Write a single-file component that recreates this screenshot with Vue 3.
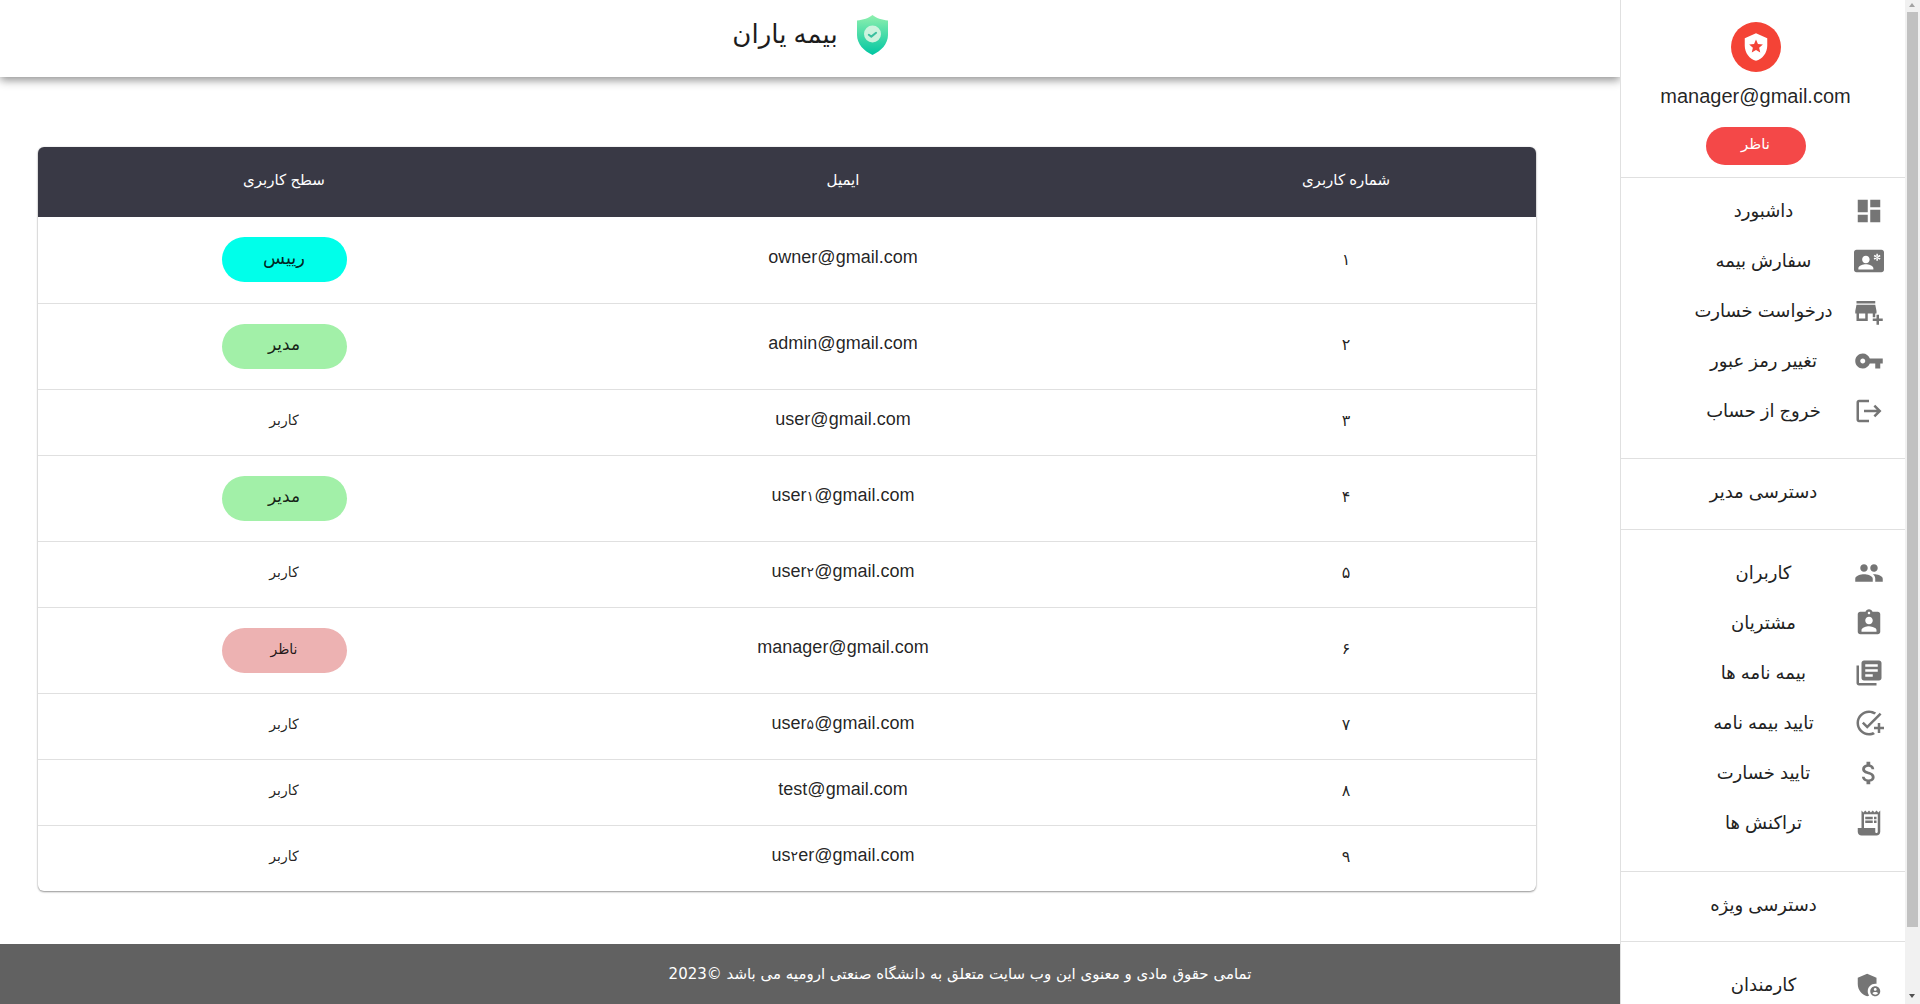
<script setup>
const rows = [
  { id: '۱', email: 'owner@gmail.com', level: 'رییس', chip: 'owner' },
  { id: '۲', email: 'admin@gmail.com', level: 'مدیر', chip: 'admin' },
  { id: '۳', email: 'user@gmail.com', level: 'کاربر', chip: '' },
  { id: '۴', email: 'user۱@gmail.com', level: 'مدیر', chip: 'admin' },
  { id: '۵', email: 'user۲@gmail.com', level: 'کاربر', chip: '' },
  { id: '۶', email: 'manager@gmail.com', level: 'ناظر', chip: 'manager' },
  { id: '۷', email: 'user۵@gmail.com', level: 'کاربر', chip: '' },
  { id: '۸', email: 'test@gmail.com', level: 'کاربر', chip: '' },
  { id: '۹', email: 'us۲er@gmail.com', level: 'کاربر', chip: '' },
]
const emailParts = (email) => email.split(/([۰-۹])/).filter(Boolean)
const isDigit = (part) => /^[۰-۹]$/.test(part)

const dashboard = 'M3 13h8V3H3v10zm0 8h8v-6H3v6zm10 0h8V11h-8v10zm0-18v6h8V3h-8z'
const contact = 'M22 3H2C.9 3 0 3.9 0 5v14c0 1.1.9 2 2 2h20c1.1 0 1.99-.9 1.99-2L24 5c0-1.1-.9-2-2-2z'
const contactOverlay = 'M9.500 7.800c1.700 0 3 1.300 3 3s-1.300 3-3 3-3-1.300-3-3 1.300-3 3-3zM15.500 18.800H3.500v-1c0-2 4-3.100 6-3.100s6 1.100 6 3.100v1zM17.900 6.200h1.200v5.600h-1.200zM20.620 10.920l.6-1.040-4.840-2.800-.6 1.040zM21.220 8.120l-.6-1.040-4.840 2.800.6 1.040z'
const business = 'M2 4h15v2H2zM15 17h2v-3h1v-2l-1-5H2l-1 5v2h1v6h9v-6h4v3zm-6 1H4v-4h5v4zM20 18v-3h-2v3h-3v2h3v3h2v-3h3v-2z'
const key = 'M12.65 10C11.83 7.67 9.61 6 7 6c-3.31 0-6 2.69-6 6s2.69 6 6 6c2.61 0 4.83-1.67 5.65-4H17v4h4v-4h2v-4H12.65zM7 14c-1.1 0-2-.9-2-2s.9-2 2-2 2 .9 2 2-.9 2-2 2z'
const logout = 'M17 7l-1.41 1.41L18.17 11H8v2h10.17l-2.58 2.58L17 17l5-5zM4 5h8V3H4c-1.1 0-2 .9-2 2v14c0 1.1.9 2 2 2h8v-2H4V5z'
const people = 'M16 11c1.66 0 2.99-1.34 2.99-3S17.66 5 16 5c-1.66 0-3 1.34-3 3s1.34 3 3 3zm-8 0c1.66 0 2.99-1.34 2.99-3S9.66 5 8 5C6.34 5 5 6.34 5 8s1.34 3 3 3zm0 2c-2.33 0-7 1.17-7 3.5V19h14v-2.5c0-2.33-4.67-3.5-7-3.5zm8 0c-.29 0-.62.02-.97.05 1.16.84 1.97 1.97 1.97 3.45V19h6v-2.5c0-2.33-4.67-3.5-7-3.5z'
const assignment = 'M19 3h-4.18C14.4 1.84 13.3 1 12 1c-1.3 0-2.4.84-2.82 2H5c-1.1 0-2 .9-2 2v14c0 1.1.9 2 2 2h14c1.1 0 2-.9 2-2V5c0-1.1-.9-2-2-2zm-7 0c.55 0 1 .45 1 1s-.45 1-1 1-1-.45-1-1 .45-1 1-1zm0 4c1.66 0 3 1.34 3 3s-1.34 3-3 3-3-1.34-3-3 1.34-3 3-3zm6 12H6v-1.4c0-2 4-3.1 6-3.1s6 1.100 6 3.100V19z'
const books = 'M4 6H2v14c0 1.1.9 2 2 2h14v-2H4V6zm16-4H8c-1.1 0-2 .9-2 2v12c0 1.1.9 2 2 2h12c1.1 0 2-.9 2-2V4c0-1.1-.9-2-2-2zm-1 9H9V9h10v2zm-4 4H9v-2h6v2zm4-8H9V5h10v2z'
const addTask = 'M22 5.180 10.590 16.600l-4.240-4.240 1.410-1.410 2.830 2.830 10-10L22 5.180zM12 20c-4.410 0-8-3.590-8-8s3.590-8 8-8c1.570 0 3.040.460 4.280 1.250l1.450-1.450C16.100 2.670 14.130 2 12 2 6.480 2 2 6.480 2 12s4.480 10 10 10c1.730 0 3.360-.440 4.780-1.220l-1.500-1.500c-1 .460-2.110.720-3.280.720zM19 15h-3v2h3v3h2v-3h3v-2h-3v-3h-2v3z'
const money = 'M11.8 10.9c-2.27-.59-3-1.2-3-2.15 0-1.09 1.01-1.85 2.7-1.85 1.78 0 2.44.85 2.5 2.1h2.21c-.07-1.72-1.12-3.3-3.21-3.81V3h-3v2.16c-1.94.42-3.5 1.68-3.5 3.61 0 2.31 1.91 3.46 4.7 4.13 2.5.6 3 1.48 3 2.41 0 .69-.49 1.79-2.7 1.79-2.06 0-2.87-.92-2.98-2.1h-2.2c.12 2.19 1.76 3.42 3.68 3.83V21h3v-2.15c1.95-.37 3.5-1.5 3.5-3.55 0-2.84-2.43-3.81-4.7-4.4z'
const receipt = 'M19.5 3.5 18 2l-1.5 1.5L15 2l-1.5 1.5L12 2l-1.5 1.5L9 2 7.5 3.5 6 2v14H3v3c0 1.66 1.34 3 3 3h12c1.66 0 3-1.34 3-3V2l-1.5 1.5zM19 19c0 .55-.45 1-1 1s-1-.45-1-1v-3H8V5h11v14zM9 7h6v2H9zM16 7h2v2h-2zM9 10h6v2H9zM16 10h2v2h-2z'
const admin = 'M17 11c.34 0 .67.04 1 .09V6.27L10.5 3 3 6.27v4.91c0 4.54 3.2 8.79 7.500 9.820.550-.130 1.080-.320 1.600-.550-.690-.980-1.100-2.170-1.100-3.450 0-3.310 2.690-6 6-6zM17 13c-2.210 0-4 1.790-4 4s1.790 4 4 4 4-1.790 4-4-1.790-4-4-4zm0 1.380c.620 0 1.120.510 1.120 1.120s-.510 1.120-1.120 1.120-1.120-.510-1.120-1.120.500-1.120 1.120-1.120zm0 5.370c-.930 0-1.740-.460-2.240-1.170.050-.720 1.510-1.080 2.240-1.080s2.190.360 2.240 1.080c-.500.710-1.310 1.170-2.240 1.170z'
const police = 'M12 1 3 5v6c0 5.550 3.840 10.740 9 12 5.160-1.260 9-6.450 9-12V5l-9-4zm2.500 11.590.9 3.880-3.400-2.050-3.400 2.050.910-3.870-3-2.600 3.960-.340L12 6.020l1.540 3.640 3.960.340-3 2.590z'

const menuMain = [
  { label: 'داشبورد', icon: dashboard },
  { label: 'سفارش بیمه', icon: contact, overlay: contactOverlay },
  { label: 'درخواست خسارت', icon: business },
  { label: 'تغییر رمز عبور', icon: key },
  { label: 'خروج از حساب', icon: logout },
]
const menuAdmin = [
  { label: 'کاربران', icon: people },
  { label: 'مشتریان', icon: assignment },
  { label: 'بیمه نامه ها', icon: books },
  { label: 'تایید بیمه نامه', icon: addTask },
  { label: 'تایید خسارت', icon: money },
  { label: 'تراکنش ها', icon: receipt },
]
const menuSpecial = [{ label: 'کارمندان', icon: admin }]
const sections = [
  { items: menuMain, cls: 'list-main' },
  { heading: 'دسترسی مدیر', items: menuAdmin, cls: 'list-admin' },
  { heading: 'دسترسی ویژه', items: menuSpecial, cls: 'list-special' },
]
</script>

<template>
  <div class="page" dir="rtl">
    <div class="content">
      <header class="topbar">
        <svg class="logo" viewBox="0 0 31 40" width="31" height="40" aria-hidden="true">
          <defs>
            <linearGradient id="shieldFill" x1="0" y1="0" x2="0" y2="1">
              <stop offset="0" stop-color="#8ff0ae" />
              <stop offset="1" stop-color="#00c6a2" />
            </linearGradient>
          </defs>
          <path d="M15.500 0C19 3 25 5 31 5.500V20C31 29 24 36 15.500 40 7 36 0 29 0 20V5.500C6 5 12 3 15.500 0z" fill="url(#shieldFill)" />
          <circle cx="15.500" cy="19" r="8.500" fill="#cdf3de" />
          <path d="M11.800 19.800l2.500 1.800 4.800-3.800" fill="none" stroke="#3bbf9f" stroke-width="2" stroke-linecap="round" stroke-linejoin="round" />
        </svg>
        <span class="brand">بیمه یاران</span>
      </header>

      <main class="table-wrap">
        <table class="users">
          <colgroup>
            <col class="col-id" />
            <col class="col-email" />
            <col class="col-level" />
          </colgroup>
          <thead>
            <tr>
              <th>شماره کاربری</th>
              <th>ایمیل</th>
              <th>سطح کاربری</th>
            </tr>
          </thead>
          <tbody>
            <tr v-for="row in rows" :key="row.id">
              <td class="cell-id">{{ row.id }}</td>
              <td class="cell-email"><span v-for="(part, i) in emailParts(row.email)" :key="i" :class="{ 'mail-digit': isDigit(part) }">{{ part }}</span></td>
              <td class="cell-level">
                <span v-if="row.chip" class="chip" :class="row.chip">{{ row.level }}</span>
                <template v-else>{{ row.level }}</template>
              </td>
            </tr>
          </tbody>
        </table>
      </main>
    </div>

    <footer class="footer">تمامی حقوق مادی و معنوی این وب سایت متعلق به دانشگاه صنعتی ارومیه می باشد ©2023</footer>

    <aside class="sidebar">
      <div class="profile">
        <div class="avatar">
          <svg viewBox="0 0 24 24" width="30" height="30" aria-hidden="true"><path :d="police" fill="#fff" /></svg>
        </div>
        <div class="profile-mail">manager@gmail.com</div>
        <div class="role">ناظر</div>
      </div>

      <template v-for="section in sections" :key="section.cls">
        <div v-if="section.heading" class="heading">{{ section.heading }}</div>
        <ul class="list" :class="section.cls">
          <li v-for="item in section.items" :key="item.label" class="item">
            <svg class="icon" viewBox="0 0 24 24" width="30" height="30" aria-hidden="true">
              <path :d="item.icon" />
              <path v-if="item.overlay" :d="item.overlay" fill="#fff" />
            </svg>
            <span class="label">{{ item.label }}</span>
          </li>
        </ul>
      </template>
    </aside>

    <div class="scrollbar" aria-hidden="true">
      <span class="arrow arrow-up"></span>
      <span class="thumb"></span>
      <span class="arrow arrow-down"></span>
    </div>
  </div>
</template>

<style>
html, body { margin: 0; height: 100%; overflow: hidden; background: #fff; }
</style>

<style scoped>
.page {
  height: 100vh;
  display: flex;
  flex-direction: column;
  font-family: "Liberation Sans", "DejaVu Sans", sans-serif;
  color: rgba(0, 0, 0, 0.87);
  background: #fff;
}
.content {
  flex: 1;
  padding-right: 300px;
  min-height: 0;
}
.topbar {
  height: 77px;
  display: flex;
  align-items: center;
  justify-content: center;
  gap: 19px;
  background: #fff;
  box-shadow: 0 3px 9px rgba(0, 0, 0, 0.45);
}
.logo { margin-top: -7px; }
.brand {
  font-size: 26px;
  color: #1c1c1c;
  margin-top: -8px;
}
.table-wrap {
  padding: 70px 84px 0 38px;
}
.users {
  width: 1498px;
  border-collapse: separate;
  border-spacing: 0;
  table-layout: fixed;
  border-radius: 6px;
  box-shadow: 0 1px 2px rgba(0, 0, 0, 0.4), 0 0 2px rgba(0, 0, 0, 0.12);
  background: #fff;
}
.col-id { width: 380px; }
.col-email { width: 626px; }
.col-level { width: 492px; }
.users th {
  height: 70px;
  padding: 0 0 4px;
  box-sizing: border-box;
  background: #393945;
  color: #fff;
  font-size: 15px;
  font-weight: 400;
  text-align: center;
}
.users th:first-child { border-top-right-radius: 6px; }
.users th:last-child { border-top-left-radius: 6px; }
.users td {
  border-top: 1px solid #e0e0e0;
  line-height: 25px;
  text-align: center;
  vertical-align: middle;
}
.users tbody tr:first-child td { border-top: 0; }
.users td.cell-id {
  font-size: 16px;
  padding: 18px 0 22px;
}
.users td.cell-email {
  font-size: 18px;
  padding: 17px 0 23px;
}
.users td.cell-level {
  font-size: 14px;
  padding: 18px 0 22px;
}
.users tbody tr:first-child td.cell-id { padding: 20px 0 21px; }
.users tbody tr:first-child td.cell-email { padding: 18px 0 23px; }
.users tbody tr:first-child td.cell-level { padding: 18px 0 23px; }
.mail-digit { font-size: 14px; line-height: 0; }
.chip {
  display: block;
  width: 125px;
  height: 45px;
  margin: 2px auto -2px;
  border-radius: 23px;
  line-height: 43px;
  font-size: 14px;
}
.chip.owner { background: #00ffea; font-size: 18px; }
.chip.admin { background: #a2f0a8; font-size: 17px; line-height: 42px; }
.chip.manager { background: #edb2b2; line-height: 42px; }

.footer {
  flex: none;
  height: 60px;
  background: #616161;
  color: #fff;
  font-family: "DejaVu Sans", sans-serif;
  font-size: 15px;
  line-height: 60px;
  text-align: center;
}

.sidebar {
  position: fixed;
  top: 0;
  right: 15px;
  bottom: 0;
  width: 285px;
  box-sizing: border-box;
  overflow: hidden;
  background: #fff;
  border-left: 1px solid #e0e0e0;
}
.profile {
  height: 178px;
  box-sizing: border-box;
  padding: 22px 15px 0 0;
  display: flex;
  flex-direction: column;
  align-items: center;
  border-bottom: 1px solid #e0e0e0;
}
.avatar {
  width: 50px;
  height: 50px;
  border-radius: 50%;
  background: #f44336;
  display: flex;
  align-items: center;
  justify-content: center;
}
.profile-mail {
  margin-top: 12px;
  font-size: 20px;
  line-height: 24px;
}
.role {
  margin-top: 19px;
  width: 100px;
  height: 38px;
  border-radius: 19px;
  background: #f44848;
  color: #fff;
  font-size: 15px;
  line-height: 34px;
  text-align: center;
}
.list {
  list-style: none;
  margin: 0;
  padding: 0;
}
.list-main { padding: 8px 0 22px; border-bottom: 1px solid #e0e0e0; }
.list-admin { padding: 18px 0 23px; border-bottom: 1px solid #e0e0e0; }
.list-special { padding: 18px 0 81px; }
.item {
  height: 50px;
  display: flex;
  align-items: center;
  padding: 0 21px 0 60px;
}
.icon {
  flex: none;
  fill: #757575;
  margin-left: 8px;
}
.label {
  flex: 1;
  text-align: center;
  font-size: 18px;
  color: #222;
}
.heading {
  height: 70.500px;
  box-sizing: border-box;
  line-height: 66px;
  padding-left: 60px;
  padding-right: 59px;
  text-align: center;
  font-size: 18px;
  color: #222;
  border-bottom: 1px solid #e0e0e0;
}

.scrollbar {
  position: fixed;
  top: 0;
  right: 0;
  bottom: 0;
  width: 15px;
  background: #f1f1f1;
}
.thumb {
  position: absolute;
  top: 12px;
  left: 2px;
  width: 11px;
  height: 915px;
  background: #c1c1c1;
}
.arrow {
  position: absolute;
  left: 4px;
  width: 0;
  height: 0;
  border-left: 3.500px solid transparent;
  border-right: 3.500px solid transparent;
}
.arrow-up {
  top: 3px;
  border-bottom: 4px solid #a3a3a3;
}
.arrow-down {
  bottom: 6px;
  border-top: 4px solid #505050;
}
</style>
